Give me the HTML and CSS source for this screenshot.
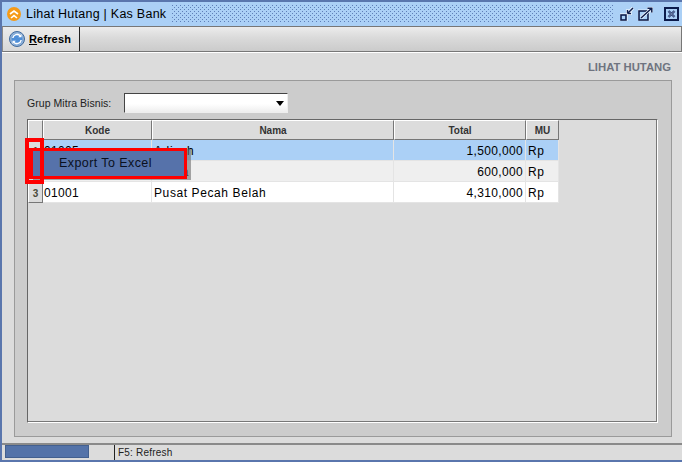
FILE: index.html
```html
<!DOCTYPE html>
<html lang="id">
<head>
<meta charset="utf-8">
<title>Lihat Hutang | Kas Bank</title>
<link rel="stylesheet" href="styles.css">
</head>
<body>
<div class="window">
  <header class="titlebar">
    <svg class="app-icon" width="14" height="14" viewBox="0 0 14 14"><circle cx="7" cy="7" r="7" fill="#f59a17"/><path d="M3 7l4-3 4 3" fill="none" stroke="#fff" stroke-width="1.600"/><path d="M4 11l3-2.400 3 2.400" fill="none" stroke="#fff" stroke-width="1.600"/></svg>
    <span class="title">Lihat Hutang | Kas Bank</span>
    <div class="dots"></div>
    <div class="controls">
      <svg class="ctl" width="14" height="14" viewBox="0 0 14 14"><path d="M13 1L7.500 6.500M7.500 2.500v4h4" fill="none" stroke="#fff" stroke-width="3"/><path d="M13 1L7.500 6.500M7.500 3v3.500H11" fill="none" stroke="#0c1c4c" stroke-width="1.500"/><rect x="1" y="8" width="5" height="5" fill="#abd0f6" stroke="#fff" stroke-width="3"/><rect x="1" y="8" width="5" height="5" fill="#abd0f6" stroke="#0c1c4c" stroke-width="1.600"/></svg>
      <svg class="ctl" width="15" height="14" viewBox="0 0 15 14"><rect x="1" y="4" width="9" height="9" fill="#abd0f6" stroke="#fff" stroke-width="2.600"/><rect x="1" y="4" width="9" height="9" fill="#abd0f6" stroke="#0c1c4c" stroke-width="1.600"/><path d="M3 11L14 1M9.500 1H14v4.500" fill="none" stroke="#fff" stroke-width="2.800"/><path d="M3 11L14 1M9.500 1.200H13.800V5.500" fill="none" stroke="#0c1c4c" stroke-width="1.500"/></svg>
      <svg class="ctl close" width="15" height="14" viewBox="0 0 15 14"><rect x="1" y="1" width="13" height="12" fill="#abd0f6" stroke="#0c1c4c" stroke-width="2"/><path d="M4.500 4l6 6M10.500 4l-6 6" stroke="#24386e" stroke-width="2.400"/><path d="M4.500 4l6 6M10.500 4l-6 6" stroke="#9fb0d0" stroke-width=".7"/></svg>
    </div>
  </header>

  <nav class="toolbar">
    <button class="tool-btn" type="button">
      <svg width="16" height="16" viewBox="0 0 16 16"><circle cx="8" cy="8" r="7.500" fill="#8fb0d6" stroke="#3f6a9e"/><circle cx="8" cy="8" r="5.500" fill="#4f8fd8"/><path d="M3.800 7a4.300 4.300 0 0 1 7.400-2.200M12.200 9a4.300 4.300 0 0 1-7.400 2.200" fill="none" stroke="#fff" stroke-width="1.500"/><path d="M12.500 3v3.300H9.200zM3.500 13V9.700h3.300z" fill="#fff"/></svg>
      <span><u>R</u>efresh</span>
    </button>
  </nav>

  <main class="content">
    <h1 class="heading">LIHAT HUTANG</h1>
    <section class="panel">
      <div class="filter">
        <label class="filter-label">Grup Mitra Bisnis:</label>
        <div class="select"><span class="arrow"></span></div>
      </div>
      <div class="table-frame">
        <table class="grid">
          <thead>
            <tr><th class="rh"></th><th class="c-kode">Kode</th><th class="c-nama">Nama</th><th class="c-total">Total</th><th class="c-mu">MU</th></tr>
          </thead>
          <tbody>
            <tr class="selected"><td class="rh">1</td><td class="kode">01005</td><td>Adiyah</td><td class="num">1,500,000</td><td>Rp</td></tr>
            <tr class="alt"><td class="rh">2</td><td class="kode">01002</td><td>Mulya</td><td class="num">600,000</td><td>Rp</td></tr>
            <tr><td class="rh">3</td><td class="kode">01001</td><td>Pusat Pecah Belah</td><td class="num">4,310,000</td><td>Rp</td></tr>
          </tbody>
        </table>
      </div>
    </section>
  </main>

  <footer class="statusbar">
    <div class="progress"><div class="progress-fill"></div></div>
    <div class="hint">F5: Refresh</div>
  </footer>

  <div class="menu">Export To Excel</div>
  <div class="mark"></div>
</div>
</body>
</html>
```
FILE: styles.css
```css
* { box-sizing: border-box; }
html, body { margin: 0; padding: 0; }
body { width: 682px; height: 462px; overflow: hidden; font-family: "Liberation Sans", Arial, sans-serif; color: #000; }

.window {
  position: relative;
  width: 682px;
  height: 462px;
  display: flex;
  flex-direction: column;
  background: #dcdcdc;
  border-top: 2px solid #5a76ad;
  border-left: 2px solid #5a76ad;
  border-bottom: 2px solid #5a76ad;
}

.titlebar {
  height: 24px;
  flex: none;
  display: flex;
  align-items: center;
  background: #abd0f6;
  padding-left: 5px;
}
.app-icon { flex: none; margin-right: 5px; }
.title { font-size: 12.500px; letter-spacing: .25px; white-space: nowrap; width: 146px; flex: none; }
.dots {
  flex: none;
  width: 442px;
  height: 18px;
  background-image:
    radial-gradient(circle at .5px .5px, #5f7fb8 .7px, transparent .8px),
    radial-gradient(circle at .5px .5px, #5f7fb8 .7px, transparent .8px);
  background-size: 4px 4px;
  background-position: 0 0, 2px 2px;
}
.controls { display: flex; align-items: center; margin-left: 6px; gap: 4px; }
.close { margin-left: 7px; }

.toolbar {
  height: 26px;
  flex: none;
  display: flex;
  background: linear-gradient(#ececec, #dadada 45%, #cbcbcb);
  border: 1px solid #777;
  border-left-color: #8a8a8a;
}
.tool-btn {
  height: 24px;
  width: 77px;
  display: flex;
  align-items: center;
  gap: 4px;
  padding: 0 0 0 6px;
  background: linear-gradient(#ececec, #d8d8d8);
  border: 0;
  border-right: 1px solid #222;
  font: bold 11px "Liberation Sans", Arial, sans-serif;
  letter-spacing: .15px;
  color: #000;
}

.content {
  flex: 1;
  min-height: 0;
  display: flex;
  flex-direction: column;
  padding: 8px 10px 6px 12px;
  border-top: 1px solid #fff;
}
.heading {
  margin: 0 0 7px;
  height: 12px;
  line-height: 12px;
  padding-right: 1px;
  text-align: right;
  font-size: 11.300px;
  font-weight: bold;
  color: #6f7480;
}
.panel {
  flex: 1;
  min-height: 0;
  display: flex;
  flex-direction: column;
  background: #cccccc;
  border: 1px solid #9a9a9a;
  padding: 12px 13px 13px 12px;
}
.filter { display: flex; align-items: center; height: 20px; flex: none; }
.filter-label { width: 97px; font-size: 10.500px; letter-spacing: .05px; color: #222; }
.select {
  position: relative;
  width: 164px;
  height: 20px;
  background: linear-gradient(#fff 55%, #eee);
  border: 1px solid #444;
  border-right-color: #eee;
  border-bottom-color: #eee;
}
.arrow {
  position: absolute;
  right: 3px;
  top: 7px;
  border: 4px solid transparent;
  border-top: 5px solid #000;
  border-bottom: 0;
}

.table-frame {
  flex: 1;
  min-height: 0;
  margin-top: 6px;
  background: #dcdcdc;
  border: 1px solid #fff;
  border-top-color: #666;
  border-left-color: #666;
  box-shadow: inset -1px -1px 0 #777;
}
.grid { border-collapse: separate; border-spacing: 0; table-layout: fixed; width: 531px; }
.grid th {
  height: 20px;
  padding: 1px 0 0;
  background: #dcdcdc;
  font-size: 10px;
  font-weight: bold;
  text-align: center;
  color: #333;
  border-top: 1px solid #fff;
  border-left: 1px solid #fff;
  border-right: 1px solid #777;
  border-bottom: 1px solid #777;
}
.grid th.rh { width: 15px; }
.c-kode { width: 109px; }
.c-nama { width: 242px; }
.c-total { width: 132px; }
.c-mu { width: 33px; }
.grid td {
  height: 21px;
  padding: 2px 2px 0;
  font-size: 12px;
  letter-spacing: .6px;
  background: #fff;
  white-space: nowrap;
  border-right: 1px solid #e4e4e4;
  border-bottom: 1px solid #e4e4e4;
}
.grid td.kode { padding-left: 1px; letter-spacing: .35px; }
.grid td.rh {
  padding: 1px 0 0;
  text-align: center;
  background: #dcdcdc;
  font-size: 10px;
  font-weight: bold;
  letter-spacing: 0;
  color: #4a4a3a;
  border-top: 1px solid #fff;
  border-left: 1px solid #fff;
  border-right: 1px solid #777;
  border-bottom: 1px solid #777;
}
.grid .num { text-align: right; letter-spacing: .35px; }
.selected td { background: #abd0f6; }
.alt td { background: #efefef; }

.statusbar {
  height: 17px;
  flex: none;
  display: flex;
  border-top: 2px solid #8a8a8a;
  background: #dcdcdc;
}
.progress {
  width: 113px;
  padding: 0 0 2px 3px;
  border-right: 1px solid #222;
}
.progress-fill { width: 84px; height: 100%; background: #5473a9; border: 1px solid #43608f; }
.hint { padding-left: 3px; font-size: 10px; line-height: 15px; letter-spacing: .2px; color: #222; }

.menu {
  position: absolute;
  left: 27px;
  top: 146px;
  width: 158px;
  height: 31px;
  padding-left: 26px;
  background: #5672aa;
  border: 3px solid #f00;
  border-left-width: 4px;
  box-shadow: 4px 1px 0 rgba(110,110,110,.6);
  font-size: 12.500px;
  letter-spacing: .42px;
  line-height: 25px;
  color: #0a1020;
}
.mark {
  position: absolute;
  left: 23px;
  top: 136px;
  width: 19px;
  height: 46px;
  border: 4px solid #f00;
}
```
